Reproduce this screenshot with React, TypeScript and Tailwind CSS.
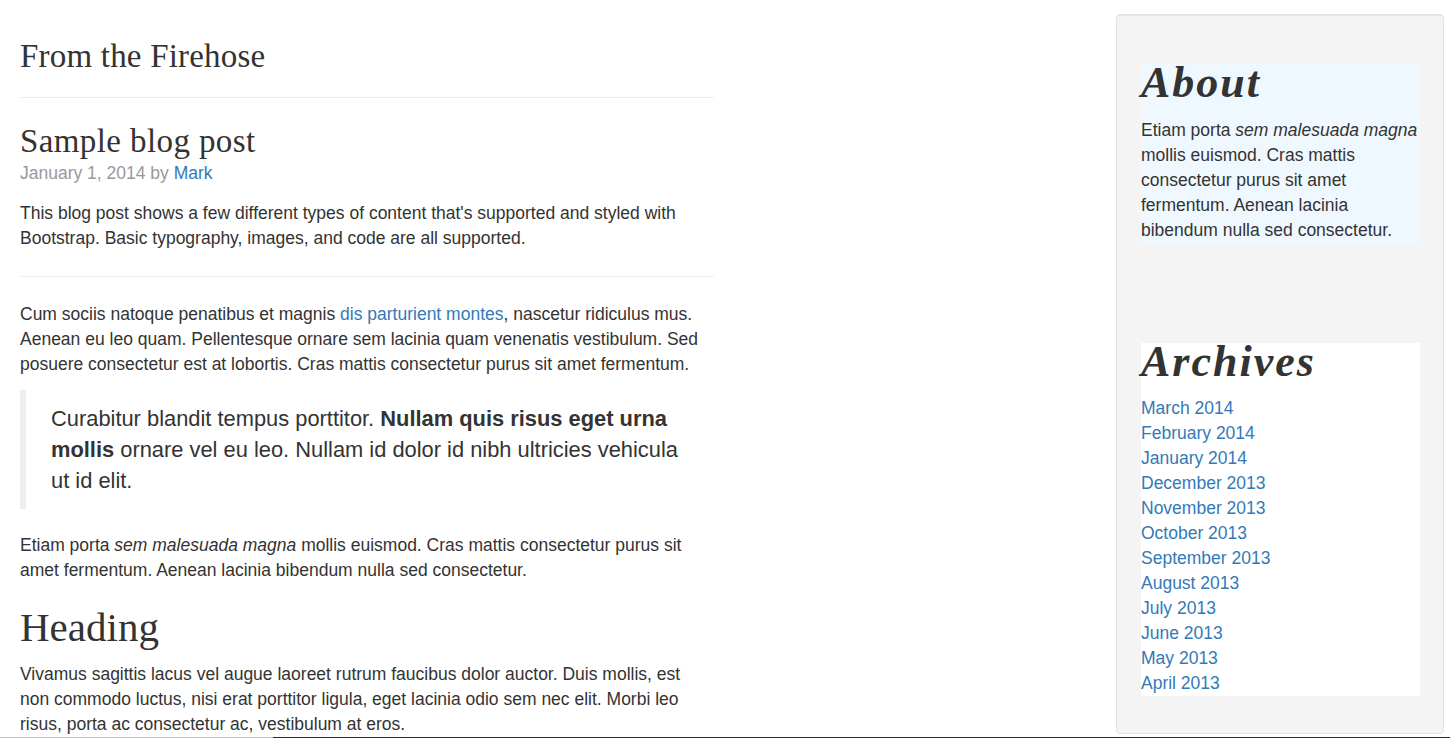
const archives = [
  'March 2014',
  'February 2014',
  'January 2014',
  'December 2013',
  'November 2013',
  'October 2013',
  'September 2013',
  'August 2013',
  'July 2013',
  'June 2013',
  'May 2013',
  'April 2013'
];

function BlogPost() {
  return (
    <div>
      <h2 className="mt-[25px] mb-[2px] font-['Liberation_Serif',serif] text-[33px] leading-[36px] font-normal tracking-[0.4px]">
        Sample blog post
      </h2>
      <p className="mb-[15px] text-[#999]">
        January 1, 2014 by{' '}
        <a href="#" className="text-[#337ab7]">
          Mark
        </a>
      </p>
      <p>
        This blog post shows a few different types of content that's supported and styled with Bootstrap.
        Basic typography, images, and code are all supported.
      </p>
      <hr className="my-[25px] border-t border-[#eee]" />
      <p>
        Cum sociis natoque penatibus et magnis{' '}
        <a href="#" className="text-[#337ab7]">
          dis parturient montes
        </a>
        , nascetur ridiculus mus. Aenean eu leo quam. Pellentesque ornare sem lacinia quam venenatis
        vestibulum. Sed posuere consectetur est at lobortis. Cras mattis consectetur purus sit amet fermentum.
      </p>
      <blockquote className="mt-[13px] mb-[24px] border-l-[6px] border-[#eee] py-[12.5px] pl-[25px] pr-[25px] text-[21.875px] leading-[31.25px]">
        Curabitur blandit tempus porttitor. <strong className="font-bold">Nullam quis risus eget urna mollis</strong>{' '}
        ornare vel eu leo. Nullam id dolor id nibh ultricies vehicula ut id elit.
      </blockquote>
      <p>
        Etiam porta <em>sem malesuada magna</em> mollis euismod. Cras mattis consectetur purus sit amet
        fermentum. Aenean lacinia bibendum nulla sed consectetur.
      </p>
      <h2 className="mt-[25px] mb-[15px] font-['Liberation_Serif',serif] text-[41px] leading-[39px] font-normal">
        Heading
      </h2>
      <p>
        Vivamus sagittis lacus vel augue laoreet rutrum faucibus dolor auctor. Duis mollis, est non commodo
        luctus, nisi erat porttitor ligula, eget lacinia odio sem nec elit. Morbi leo risus, porta ac
        consectetur ac, vestibulum at eros.
      </p>
    </div>
  );
}

function Sidebar() {
  return (
    <aside className="mt-[14px] mr-[6px] h-[720px] w-[328px] shrink-0 rounded-[4px] border border-[#e3e3e3] bg-[#f4f4f4] pl-[24px] pr-[23px] pt-[49px] shadow-[inset_0_1px_1px_rgba(0,0,0,0.05)]">
      {/* About */}
      <div className="bg-[#f0f8ff]">
        <h4 className="mb-[16px] font-['Liberation_Serif',serif] text-[44px] leading-[38px] font-bold italic tracking-[2px]">
          About
        </h4>
        <p>
          Etiam porta <em>sem malesuada magna</em> mollis euismod. Cras mattis consectetur purus sit amet
          fermentum. Aenean lacinia bibendum nulla sed consectetur.
        </p>
      </div>

      {/* Archives */}
      <div className="mt-[100px] bg-white">
        <h4 className="mb-[15px] font-['Liberation_Serif',serif] text-[44px] leading-[38px] font-bold italic tracking-[2px]">
          Archives
        </h4>
        <ol>
          {archives.map((month) => (
            <li key={month}>
              <a href="#" className="text-[#337ab7]">
                {month}
              </a>
            </li>
          ))}
        </ol>
      </div>
    </aside>
  );
}

export default function App() {
  return (
    <div className="flex h-[738px] w-full flex-col overflow-hidden bg-white font-['Liberation_Sans',Arial,sans-serif] text-[17.5px] leading-[25px] text-[#333]">
      <div className="flex min-h-0 flex-1 overflow-hidden">
        <main className="ml-[20px] w-[694px] shrink-0 pt-[38px]">
          <h2 className="border-b border-[#eee] pb-[23px] font-['Liberation_Serif',serif] text-[33px] leading-[36px] font-normal tracking-[0.2px]">
            From the Firehose
          </h2>
          <BlogPost />
        </main>
        <div className="flex-1" />
        <Sidebar />
      </div>
      {/* scrollbar edge left over in the capture */}
      <div className="flex h-px shrink-0">
        <div className="w-[273px] bg-[#c6c6c6]" />
        <div className="flex-1 bg-[#2b2b2b]" />
      </div>
    </div>
  );
}
